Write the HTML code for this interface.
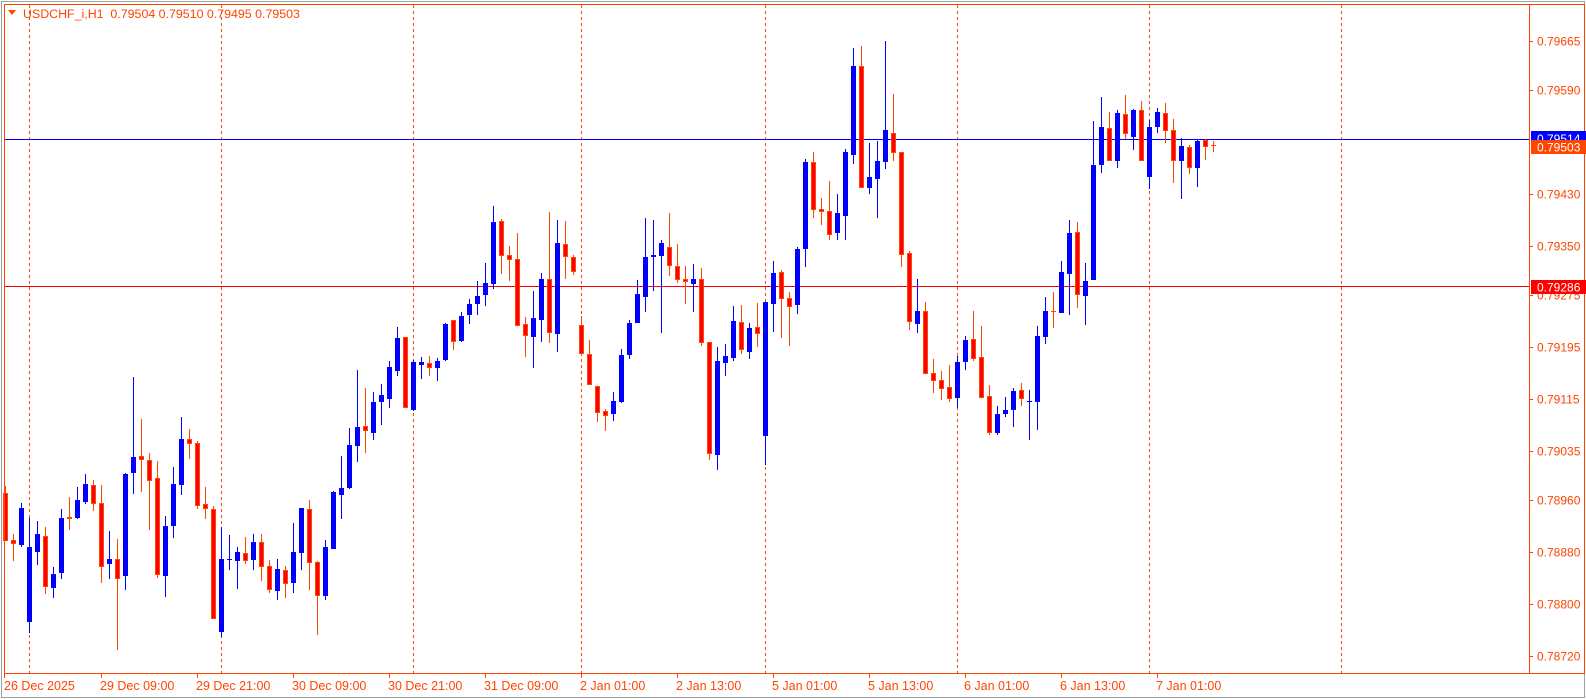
<!DOCTYPE html>
<html><head><meta charset="utf-8">
<style>
html,body{margin:0;padding:0;background:#fff;width:1586px;height:699px;overflow:hidden}
svg{display:block}
text{font-family:"Liberation Sans",sans-serif;}
</style></head>
<body>
<svg id="s" width="1586" height="699" viewBox="0 0 1586 699" xmlns="http://www.w3.org/2000/svg">
<rect x="0" y="0" width="1586" height="699" fill="#fff"/>
<rect x="1.5" y="1.5" width="1583" height="696" fill="none" stroke="#a0a0a0" stroke-width="1"/>
<g id="grid" stroke="#ff4500" stroke-width="1" stroke-dasharray="3,3">
<line x1="29.5" y1="5" x2="29.5" y2="673"/>
<line x1="221.5" y1="5" x2="221.5" y2="673"/>
<line x1="413.5" y1="5" x2="413.5" y2="673"/>
<line x1="581.5" y1="5" x2="581.5" y2="673"/>
<line x1="765.5" y1="5" x2="765.5" y2="673"/>
<line x1="957.5" y1="5" x2="957.5" y2="673"/>
<line x1="1149.5" y1="5" x2="1149.5" y2="673"/>
<line x1="1341.5" y1="5" x2="1341.5" y2="673"/>
</g>
<line x1="4" y1="139.5" x2="1529" y2="139.5" stroke="#0000ff" stroke-width="1"/>
<line x1="4" y1="286.5" x2="1529" y2="286.5" stroke="#ff0000" stroke-width="1"/>
<g id="candles"></g>
<rect x="4.5" y="4.5" width="1580" height="669" fill="none" stroke="#ff4500" stroke-width="1"/>
<line x1="1529.5" y1="4" x2="1529.5" y2="674" stroke="#ff4500" stroke-width="1"/>
<polygon points="8,10 16,10 12,15" fill="#ff4500"/>
<text x="23" y="18" font-size="12.4" fill="#ff4500">USDCHF_i,H1&#160; 0.79504 0.79510 0.79495 0.79503</text>
<g id="yax" font-size="12" fill="#ff4500"></g>
<g id="xax" font-size="12.5" fill="#ff4500"></g>
<rect x="1531" y="131" width="55" height="9" fill="#0000ff"/>
<text x="1537" y="143" font-size="12" fill="#fff">0.79514</text>
<rect x="1531" y="140" width="55" height="14" fill="#ff4500"/>
<text x="1537" y="151.5" font-size="12" fill="#fff">0.79503</text>
<rect x="1531" y="280" width="55" height="14" fill="#ff0000"/>
<text x="1537" y="291.5" font-size="12" fill="#fff">0.79286</text>
</svg>
<script>
var D=[[0,493,541,486,541],[0,540,544,534,561],[1,508,545,503,547],[1,547,622,518,633],[1,534,552,521,565],[0,536,587,527,594],[1,574,588,567,598],[1,518,573,509,579],[0,517,519,497,530],[1,500,518,487,519],[1,484,502,474,504],[0,485,504,480,511],[0,503,567,485,583],[1,559,564,531,579],[0,559,579,539,650],[1,474,576,473,590],[1,457,473,377,494],[0,456,460,419,492],[0,460,481,453,530],[0,478,575,461,578],[1,526,576,516,597],[1,484,526,467,538],[1,439,485,417,495],[0,439,444,429,459],[0,443,506,441,509],[0,504,509,487,519],[0,509,619,506,619],[1,559,632,527,637],[1,559,560,535,570],[1,552,561,547,589],[0,553,561,537,564],[1,542,560,534,570],[0,542,567,534,581],[0,566,590,560,593],[1,569,591,559,600],[0,570,584,566,598],[1,552,583,523,593],[1,508,553,508,570],[0,509,563,500,590],[0,562,596,561,635],[1,547,596,540,600],[1,492,549,491,549],[1,488,495,456,519],[1,445,488,428,489],[1,427,446,370,462],[0,426,431,388,453],[1,402,433,392,440],[1,395,402,384,425],[1,367,399,361,408],[1,338,371,327,376],[0,337,408,337,408],[1,362,410,360,411],[1,362,365,357,379],[0,363,368,356,376],[1,361,368,358,381],[1,324,360,323,361],[0,320,342,320,350],[1,316,341,312,342],[1,304,315,299,324],[1,296,304,281,315],[1,283,295,263,306],[1,222,284,206,289],[0,221,256,219,274],[0,255,260,246,281],[0,259,326,233,326],[0,324,336,317,357],[1,318,337,291,368],[1,279,320,273,342],[0,279,333,212,343],[1,243,334,220,352],[0,244,257,221,279],[0,257,272,255,275],[0,325,354,316,355],[0,354,385,340,385],[0,386,413,386,422],[0,411,416,409,431],[1,401,414,392,421],[1,355,402,349,403],[1,323,355,320,359],[1,294,323,280,323],[1,257,297,218,312],[1,255,257,220,291],[1,243,256,240,333],[0,247,266,213,276],[0,266,280,244,283],[0,279,282,266,304],[1,279,284,264,312],[0,279,343,268,346],[0,342,454,342,460],[1,361,455,347,470],[1,356,363,344,376],[1,321,358,306,361],[0,322,350,305,354],[1,328,352,323,359],[0,327,334,303,347],[1,302,436,302,465],[1,273,304,261,332],[0,272,299,270,338],[0,298,307,292,346],[1,249,305,247,314],[1,162,249,159,267],[0,162,210,152,218],[0,209,212,198,225],[0,211,235,181,240],[1,213,233,194,240],[1,152,216,149,240],[1,66,155,48,164],[0,66,188,46,188],[1,177,188,143,194],[1,161,179,141,218],[1,130,162,41,169],[0,133,153,94,161],[0,152,255,152,267],[0,253,322,251,330],[1,311,324,279,333],[0,311,374,302,374],[0,373,381,359,393],[0,380,389,371,400],[0,387,399,365,402],[1,362,398,356,408],[1,340,362,336,370],[0,339,359,311,361],[0,357,398,326,398],[0,396,433,385,435],[1,414,433,406,435],[1,410,414,397,417],[1,391,410,388,427],[0,390,399,383,406],[1,401,402,390,440],[1,336,402,326,430],[1,311,337,297,344],[0,311,312,292,328],[1,272,313,261,313],[1,233,274,220,315],[0,232,295,222,308],[1,281,296,263,325],[1,165,280,121,280],[1,127,165,97,173],[0,128,161,112,161],[1,113,161,110,168],[0,114,134,95,139],[1,110,137,109,150],[0,110,161,101,161],[1,127,177,120,189],[1,112,127,108,133],[0,113,131,103,143],[0,130,161,119,183],[1,146,161,138,199],[0,147,168,145,174],[1,141,168,139,187],[0,140,147,139,160],[0,145,146,141,152]];
var NS="http://www.w3.org/2000/svg";
function el(p,t,a){var e=document.createElementNS(NS,t);for(var k in a)e.setAttribute(k,a[k]);p.appendChild(e);return e;}
var g=document.getElementById("candles");
D.forEach(function(c,i){
 var x=8*i+3, cx=8*i+5;
 var col=c[0]?"#0000ff":"#ff4500";
 el(g,"rect",{x:cx,y:c[3],width:1,height:Math.max(1,c[4]-c[3]),fill:col});
 var h=Math.max(1,c[2]-c[1]);
 if(c[0]){el(g,"rect",{x:x,y:c[1],width:5,height:h,fill:"#0000ff"});}
 else{
  if(h<=2){el(g,"rect",{x:x,y:c[1],width:5,height:h,fill:"#ff4500"});}
  else{el(g,"rect",{x:x+0.5,y:c[1]+0.5,width:4,height:h-1,fill:"#ff0000",stroke:"#ff4500","stroke-width":1});}
 }
});
var y=document.getElementById("yax");
[["0.79665",41],["0.79590",90],["0.79430",194],["0.79350",246],["0.79275",295],["0.79195",347],["0.79115",399],["0.79035",451],["0.78960",500],["0.78880",552],["0.78800",604],["0.78720",656]].forEach(function(l){
 el(y,"rect",{x:1529,y:l[1],width:4,height:1,fill:"#ff4500"});
 var t=el(y,"text",{x:1537,y:l[1]+4.5});t.textContent=l[0];
});
var xa=document.getElementById("xax");
var t0=el(xa,"text",{x:4,y:690});t0.textContent="26 Dec 2025";
["29 Dec 09:00","29 Dec 21:00","30 Dec 09:00","30 Dec 21:00","31 Dec 09:00","2 Jan 01:00","2 Jan 13:00","5 Jan 01:00","5 Jan 13:00","6 Jan 01:00","6 Jan 13:00","7 Jan 01:00"].forEach(function(s,k){
 var x=101+96*k;
 el(xa,"rect",{x:x,y:673,width:1,height:5,fill:"#ff4500"});
 var t=el(xa,"text",{x:x-1,y:690});t.textContent=s;
});
el(xa,"rect",{x:4,y:673,width:1,height:5,fill:"#ff4500"});
</script>
</body></html>
